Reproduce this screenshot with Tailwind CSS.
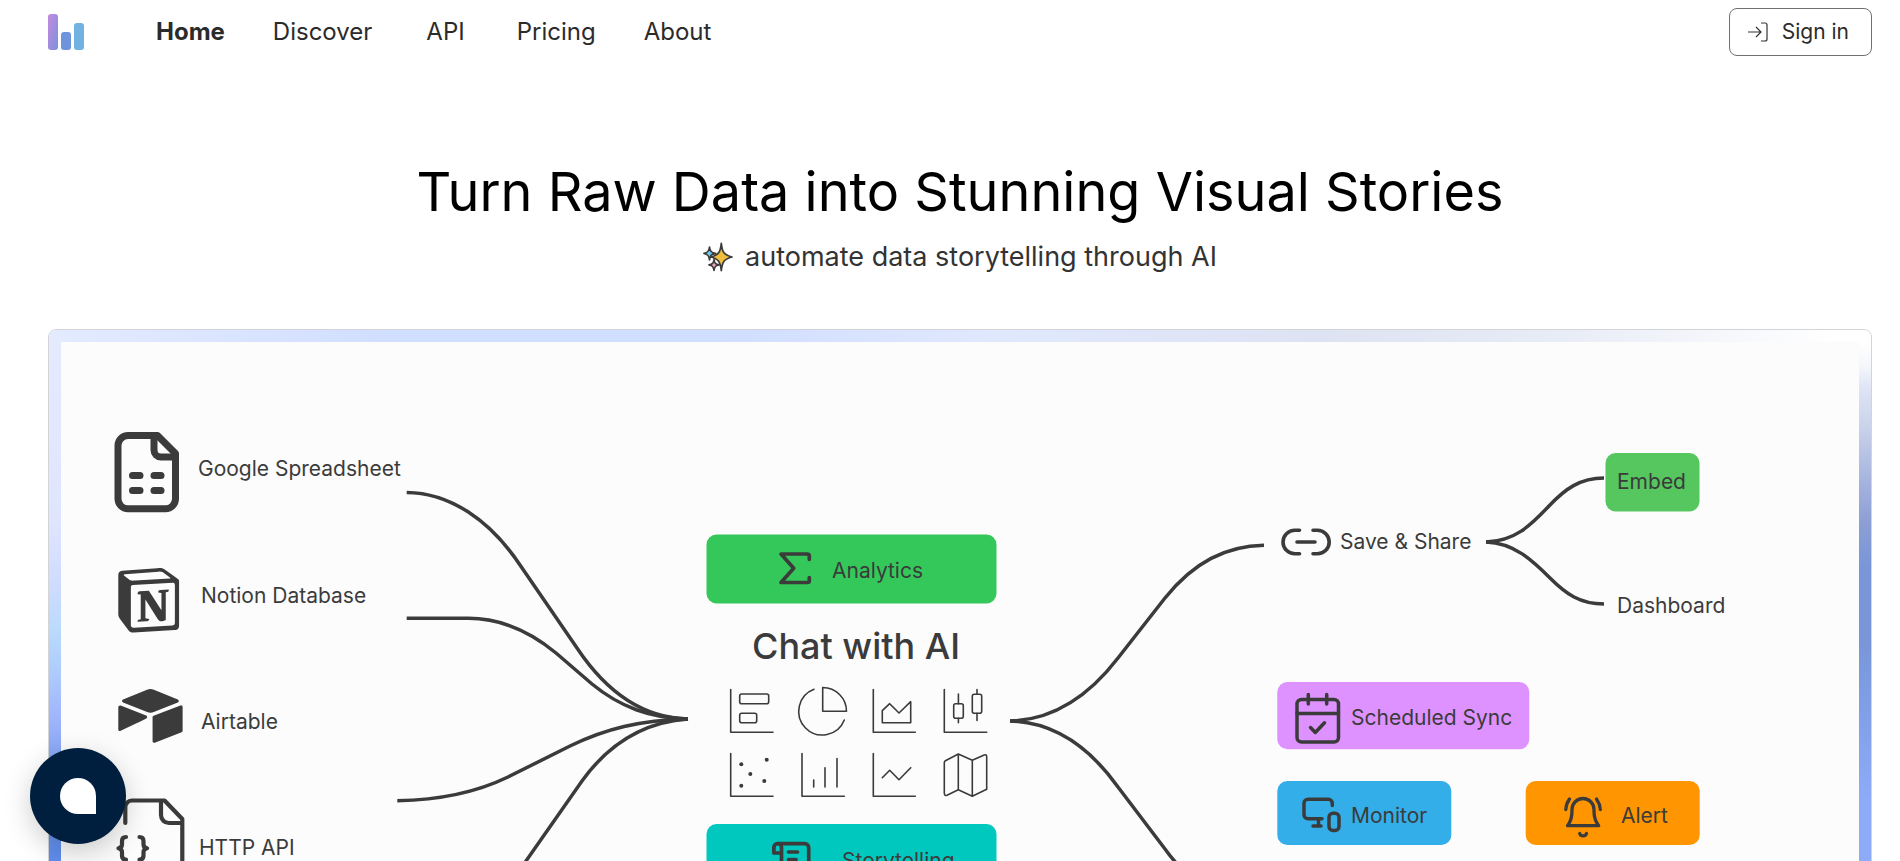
<!DOCTYPE html>
<html lang="en">
<head>
  <meta charset="UTF-8" />
  <meta name="viewport" content="width=device-width, initial-scale=1.0"/>
  <title>Turn Raw Data into Stunning Visual Stories</title>
  <script src="https://cdn.jsdelivr.net/npm/@tailwindcss/browser@4"></script>
</head>
<body class="bg-white text-[#2b2b2b] h-screen overflow-hidden font-['Inter',sans-serif]">

  <!-- Header -->
  <header class="flex items-center justify-between pl-12 pr-7 pt-2">
    <div class="flex items-center">
      <a href="#" aria-label="Home page" class="mr-18">
        <svg class="w-9 h-9" viewBox="0 0 36 36">
          <defs>
            <linearGradient id="logoA" x1="0" y1="0" x2="1" y2="1">
              <stop offset="0" stop-color="#c58ae0"/>
              <stop offset="1" stop-color="#7b92dc"/>
            </linearGradient>
          </defs>
          <rect x="0" y="0" width="10" height="36" rx="3" fill="url(#logoA)"/>
          <rect x="13" y="18" width="10" height="18" rx="3" fill="#6f93dc"/>
          <rect x="26" y="9" width="10" height="27" rx="3" fill="#72b2e2"/>
        </svg>
      </a>
      <nav class="flex items-center gap-12 text-2xl">
        <a href="#" class="font-bold">Home</a>
        <a href="#">Discover</a>
        <a href="#" class="ml-1.5">API</a>
        <a href="#" class="ml-1">Pricing</a>
        <a href="#">About</a>
      </nav>
    </div>
    <button class="flex items-center gap-3 h-12 pl-4 pr-5.5 border border-[#707070] rounded-lg text-[21px]">
      <svg class="w-6 h-6" viewBox="0 0 24 24" fill="none" stroke="#333" stroke-width="1.2">
        <path d="M2 12h13M10 7l5 5-5 5M15 3h4a2 2 0 0 1 2 2v14a2 2 0 0 1-2 2h-4"/>
      </svg>
      Sign in
    </button>
  </header>

  <!-- Hero -->
  <section class="pl-12 pr-7 pt-26 text-center">
    <h1 class="text-[54px] leading-16 text-black">Turn Raw Data into Stunning Visual Stories</h1>
    <p class="mt-[13px] flex items-center justify-center gap-3 text-[27px] leading-10 text-[#333]">
      <svg class="w-[30px] h-[30px]" viewBox="0 0 30 30" stroke="#3b3b3b" stroke-width="1.7" stroke-linejoin="round">
        <path fill="#6fc8f0" d="M6.500 5C7 9.300 8.300 10.600 12.500 11.300C8.300 12 7 13.500 6.500 18C6 13.500 4.700 12 1 11.300C4.700 10.600 6 9.300 6.500 5Z"/>
        <path fill="#f2bd3c" d="M18.300 1.300C19.300 10.500 21 13 29 15C21 17 19.300 20 18.300 28.700C17.300 20 15.600 17 8 15C15.600 13 17.300 10.500 18.300 1.300Z"/>
        <path fill="#f0a0c8" d="M11 17.500C11.500 21.300 12.500 22.300 16 22.800C12.500 23.400 11.500 24.600 11 28.500C10.500 24.600 9.500 23.400 6 22.800C9.500 22.300 10.500 21.300 11 17.500Z"/>
      </svg>
      automate data storytelling through AI
    </p>
  </section>

  <!-- Diagram panel -->
  <section class="mt-13 ml-12 mr-7 border border-[#d2d4d8] rounded-lg overflow-hidden">
    <div class="h-3 bg-[linear-gradient(90deg,#e4ebff_0%,#d0deff_19%,#d0deff_37%,#e0e8fd_52%,#dee3f3_70%,#e8ecf6_83%,#fff_98%)]"></div>
    <div class="flex">
      <div class="w-3 shrink-0 bg-[linear-gradient(180deg,#e4ebff_0px,#dfe5ff_180px,#d0dcff_240px,#b9dafc_290px,#adccfd_330px,#a3b7fc_370px,#8aa8f6_410px,#5f8eee_510px)]"></div>

      <svg class="flex-1 min-w-0 bg-[#fcfcfc] text-[21px]" viewBox="61 342 1798 560" fill="#3b3b3b">
        <!-- Connectors -->
        <g fill="none" stroke="#3b3b3b" stroke-width="3.500">
          <path d="M406.700 492.500C450 493 490 520 520 565L577 648C605 690 640 718 688 719"/>
          <path d="M406.700 618.300H467C497 618 527 629 556 653L592 684C620 707 650 718 688 719"/>
          <path d="M397.300 800.700C440 800 475 793 508 777L570 746C605 729 640 720 688 719"/>
          <path d="M688 719C645 722 610 742 582 781L526 861L492 910"/>
          <path d="M1010 721C1052 720 1088 697 1118 658L1165 598C1194 562 1226 546 1264 545.300"/>
          <path d="M1010 721C1052 722 1088 745 1118 787L1165 849Q1180 870 1200 884"/>
          <path d="M1486 542C1515 541 1530 526 1549 506C1565 489 1580 478 1604 478"/>
          <path d="M1486 542C1514 543 1532 560 1550 578C1566 594 1580 604 1604 604"/>
        </g>

        <!-- Sources -->
        <g fill="none" stroke="#3b3b3b" stroke-width="7" stroke-linecap="round" stroke-linejoin="round">
          <path d="M157.500 435.500H128a10 10 0 0 0-10 10V498.800a10 10 0 0 0 10 10H165.500a10 10 0 0 0 10-10V453.500Z"/>
          <path d="M154 436V450a7 7 0 0 0 7 7H175M132.500 475.500h7.500M154 475.500h7M132.500 490.500h7.500M154 490.500h7"/>
        </g>
        <text x="198" y="476">Google Spreadsheet</text>

        <path transform="translate(117 568) scale(2.640 2.690)" d="M4.459 4.208c.746.606 1.026.56 2.428.466l13.215-.793c.28 0 .047-.28-.046-.326L17.860 1.968c-.42-.326-.981-.7-2.055-.607L3.010 2.295c-.466.046-.56.28-.374.466zm.793 3.080v13.904c0 .747.373 1.027 1.214.98l14.523-.84c.841-.046.935-.56.935-1.167V6.354c0-.606-.233-.933-.748-.887l-15.177.887c-.56.047-.747.327-.747.933zm14.337.745c.093.42 0 .84-.42.888l-.7.140v10.264c-.608.327-1.168.514-1.635.514-.748 0-.935-.234-1.495-.933l-4.577-7.186v6.952L12.210 19s0 .84-1.168.84l-3.222.186c-.093-.186 0-.653.327-.746l.84-.233V9.854L7.822 9.760c-.094-.42.140-1.026.793-1.073l3.456-.233 4.764 7.279v-6.440l-1.215-.139c-.093-.514.28-.887.747-.933zM1.936 1.035l13.310-.98c1.634-.14 2.055-.047 3.082.7l4.249 2.986c.7.513.934.653.934 1.213v16.378c0 1.026-.373 1.634-1.680 1.726l-15.458.934c-.98.047-1.448-.093-1.962-.747l-3.129-4.060c-.56-.747-.793-1.306-.793-1.960V2.667c0-.839.374-1.540 1.447-1.632z"/>
        <text x="201" y="603">Notion Database</text>

        <path transform="translate(118.300 683.700) scale(2.680)" d="M11.992 1.966c-.434 0-.87.086-1.280.257L1.779 5.917c-.503.208-.49.908.012 1.116l8.982 3.558a3.266 3.266 0 0 0 2.454 0l8.982-3.558c.503-.196.503-.908.012-1.116l-8.957-3.694a3.255 3.255 0 0 0-1.272-.257zM23.400 8.056a.589.589 0 0 0-.222.045l-10.012 3.877a.612.612 0 0 0-.38.564v8.896a.6.6 0 0 0 .821.552L23.620 18.100a.583.583 0 0 0 .38-.551V8.653a.6.6 0 0 0-.6-.596zM.676 8.095a.644.644 0 0 0-.48.190C.086 8.396 0 8.530 0 8.690v8.355c0 .442.515.737.908.54l6.270-3.006.307-.147 2.969-1.436c.466-.22.430-.908-.061-1.092L.883 8.138a.57.57 0 0 0-.207-.044z"/>
        <text x="201" y="729">Airtable</text>

        <g fill="none" stroke="#3b3b3b" stroke-width="4.200" stroke-linecap="round" stroke-linejoin="round">
          <path d="M125.300 823V807a6.500 6.500 0 0 1 6.500-6.500H164.500L182.300 819V880M161 801V815a8 8 0 0 0 8 8H182"/>
          <path d="M126 837q-4 0-4 4v3.500q0 3-3.500 3.800q3.500.8 3.500 3.800v3.500q0 4 4 4M139.500 837q4 0 4 4v3.500q0 3 3.500 3.800q-3.500.8-3.500 3.800v3.500q0 4-4 4"/>
        </g>
        <text x="199" y="855">HTTP API</text>

        <!-- Analytics -->
        <rect x="706.500" y="534.500" width="290" height="69" rx="10" fill="#34c85a"/>
        <path d="M809.300 559.300V556a2 2 0 0 0-2-2H781L793.700 568.300L781 582.500H807.300a2 2 0 0 0 2-2V577.500" fill="none" stroke="#3b3b3b" stroke-width="3.700" stroke-linecap="round" stroke-linejoin="round"/>
        <text x="832" y="578">Analytics</text>

        <text x="752" y="659" class="text-[36px] font-medium">Chat with AI</text>

        <!-- Chart types -->
        <g fill="none" stroke="#3b3b3b" stroke-width="1.600" stroke-linecap="round" stroke-linejoin="round">
          <path d="M730.700 689.500V732.300H773"/>
          <rect x="739.700" y="694" width="29" height="9.700" rx="2"/>
          <rect x="739.700" y="713.300" width="17" height="9.400" rx="2"/>
          <path d="M822.700 711.300V687.500a23.800 23.800 0 0 1 23.800 23.800Z"/>
          <path d="M814 689.300A23.600 23.600 0 1 0 844.300 720"/>
          <path d="M873.300 689.500V732.300H915.300"/>
          <path d="M882.300 710.700L889.700 703.700L899 713L910.700 701.700V722.700H882.300Z"/>
          <path d="M944.300 689.500V732.300H986.700"/>
          <rect x="953.700" y="703.700" width="9.600" height="14.600" rx="2"/>
          <rect x="972.300" y="694.300" width="9.400" height="19" rx="2"/>
          <path d="M958.400 694V703.700M958.400 718.300V722.700M977 689.500V694.300M977 713.300V720.500"/>
          <path d="M730.700 753.500V796.300H773"/>
          <path d="M802 753.500V796.300H844.300M813.700 780V787M825 767.700V787M837 758.500V787"/>
          <path d="M873.300 753.500V796.300H915.300M882.300 777.700L889.700 770.300L899 779.700L910.700 767.700"/>
          <path d="M945.400 760.700L958.300 754L972.300 760.300L984.200 754.900Q986.700 754 986.700 757V789.300L972.300 796.300L958.300 789.700L947 795.300Q944.300 796 944.300 793V762.500Q944.400 761.200 945.400 760.700ZM958.300 754V789.700M972.300 760.300V796.300"/>
        </g>
        <circle cx="741.300" cy="764.300" r="2"/>
        <circle cx="766.700" cy="759.700" r="2"/>
        <circle cx="750.300" cy="774" r="2"/>
        <circle cx="764.300" cy="781" r="2"/>
        <circle cx="741.300" cy="785.700" r="2"/>

        <!-- Storytelling -->
        <rect x="706.500" y="824" width="290" height="69" rx="10" fill="#00c8be"/>
        <path d="M777.500 843.700H804.700a4 4 0 0 1 4 4V876M777.500 843.700a3.800 3.800 0 0 0-3.600 3.800V853H781.500M777.500 843.700a3.800 3.800 0 0 1 4 3.800V876M788.500 852H797.500M788.500 859.500H796" fill="none" stroke="#3b3b3b" stroke-width="3.700" stroke-linecap="round" stroke-linejoin="round"/>
        <text x="842" y="868">Storytelling</text>

        <!-- Save & Share -->
        <path d="M1299.500 530.200H1294.800a11.800 11.800 0 0 0 0 23.600H1299.500M1313 530.200H1317.400a11.800 11.800 0 0 1 0 23.600H1313M1297 542H1315" fill="none" stroke="#3b3b3b" stroke-width="3.600" stroke-linecap="round"/>
        <text x="1340" y="549">Save &amp; Share</text>
        <rect x="1605.500" y="453" width="94" height="58.500" rx="10" fill="#56c65f"/>
        <text x="1617" y="489">Embed</text>
        <text x="1617" y="613">Dashboard</text>

        <!-- Scheduled Sync -->
        <rect x="1277.300" y="682" width="252" height="67.300" rx="10" fill="#de92ff"/>
        <g fill="none" stroke="#3b3b3b" stroke-width="3.500" stroke-linecap="round" stroke-linejoin="round">
          <rect x="1297" y="699.500" width="41.500" height="42.500" rx="4.500"/>
          <path d="M1297 713.400H1338.500M1308.300 694.500V704M1326.700 694.500V704M1310.500 727.500L1315.300 732.500L1324.500 722.800"/>
        </g>
        <text x="1351" y="725">Scheduled Sync</text>

        <!-- Monitor -->
        <rect x="1277.300" y="781" width="174" height="64" rx="10" fill="#34aee8"/>
        <path d="M1332.300 805.500V803.200a4 4 0 0 0-4-4H1308a4 4 0 0 0-4 4V814.800a4 4 0 0 0 4 4H1322M1318.500 819V826M1313 826H1321M1333 813.300H1335a4 4 0 0 1 4 4V826.500a4 4 0 0 1-4 4H1333a4 4 0 0 1-4-4V817.300a4 4 0 0 1 4-4Z" fill="none" stroke="#3b3b3b" stroke-width="3.500" stroke-linecap="round" stroke-linejoin="round"/>
        <text x="1351" y="823">Monitor</text>

        <!-- Alert -->
        <rect x="1525.700" y="781" width="174" height="64" rx="10" fill="#ff9500"/>
        <path d="M1567.500 825.700Q1572 820 1572 811V809.500a11 11 0 0 1 22 0V811Q1594 820 1598.700 825.700ZM1579.700 833.500a3.600 3.600 0 0 0 6.800 0M1569.500 799Q1566 804 1565.800 809.500M1596.500 799Q1600 804 1600.300 809.500" fill="none" stroke="#3b3b3b" stroke-width="3.300" stroke-linecap="round" stroke-linejoin="round"/>
        <text x="1621" y="823">Alert</text>
      </svg>

      <div class="w-3 shrink-0 bg-[linear-gradient(180deg,#fff_0px,#f4f6fb_25px,#dfe5f5_45px,#cdd5ec_80px,#a5b3de_140px,#8c9fd4_180px,#7896d8_225px,#7896d8_300px,#84a2ec_390px,#8eabf7_460px,#8eabf7_520px)]"></div>
    </div>
  </section>

  <!-- Chat launcher -->
  <button aria-label="Open chat" class="fixed left-[30px] bottom-[17px] w-24 h-24 rounded-full bg-[#001f3e] shadow-[0_8px_28px_rgba(0,0,0,0.2)] flex items-center justify-center">
    <span class="w-9 h-9 bg-white rounded-full rounded-br-none"></span>
  </button>
</body>
</html>
